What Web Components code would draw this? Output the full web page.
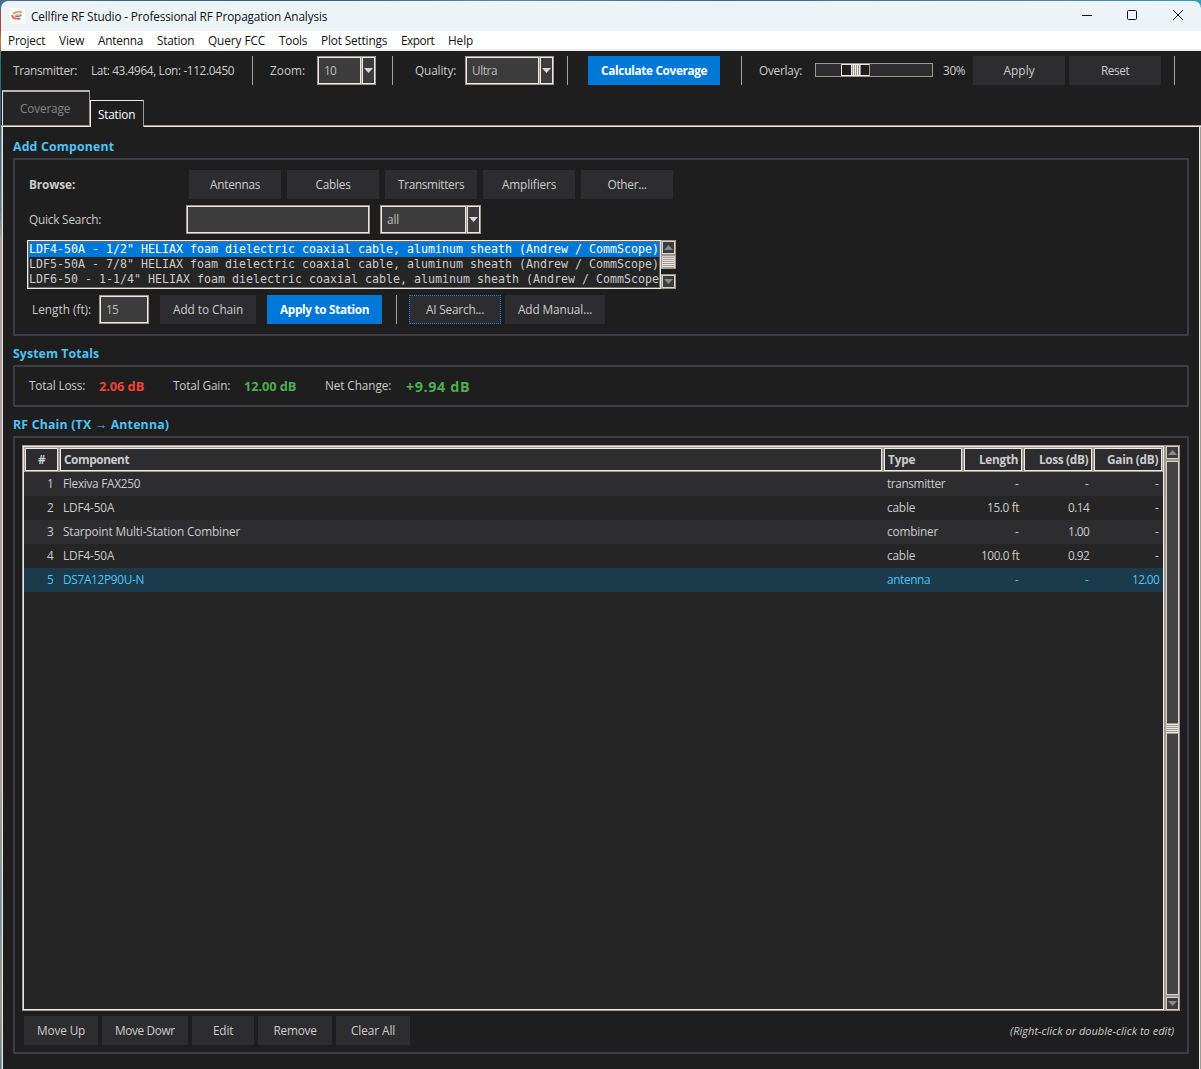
<!DOCTYPE html>
<html lang="en">
<head>
<meta charset="utf-8">
<title>Cellfire RF Studio</title>
<style>
html,body{margin:0;height:100%;overflow:hidden}
body{background:linear-gradient(90deg,#46708c,#2f5f7c 25%,#5a88a2 42%,#2f6f8f 60%,#557f99 85%,#2a9fc4);font:11.8px "Open Sans","Noto Sans",sans-serif;color:#ccc}
</style>
</head>
<body>
<rf-window></rf-window>
<script>
const GRAY = '#9e9a91', LIGHT = '#eeebe7';

const define = (name, css, html, setup) => {
  const tpl = document.createElement('template');
  tpl.innerHTML = `<style>*{box-sizing:border-box}:host{box-sizing:border-box;flex:none}${css}</style>${html}`;
  customElements.define(name, class extends HTMLElement {
    constructor() {
      super();
      this.attachShadow({ mode: 'open' }).appendChild(tpl.content.cloneNode(true));
    }
    connectedCallback() {
      if (this.hasAttribute('width')) this.style.width = this.getAttribute('width') + 'px';
      if (this.hasAttribute('gap')) this.style.marginLeft = this.getAttribute('gap') + 'px';
      if (setup) setup(this);
    }
  });
};

define('rf-sep', `:host{display:block;width:1px;height:29px;background:#a3a3a5}`, ``);

define('rf-button', `
  :host{display:flex;align-items:center;justify-content:center;height:29px;background:#2d2d30;color:#ccc;overflow:hidden}
  :host([primary]){background:#0078d7;color:#fff;font-weight:700}
  :host([focused]){border:1px dotted #0a84e6}
  :host([clip]) div{width:60px;overflow:hidden}`,
  `<div><slot></slot></div>`);

define('rf-field', `
  :host{display:flex;align-items:center;height:29px;border:1px solid ${GRAY};box-shadow:inset 0 0 0 1px ${LIGHT};background:#3c3c3c;padding-left:6px;color:#bdbdbd}`,
  `<slot></slot>`);

define('rf-combo', `
  :host{display:flex;height:29px;color:#bdbdbd}
  .f{flex:1;border:1px solid ${GRAY};border-right:0;box-shadow:inset 0 0 0 1px ${LIGHT};background:#3c3c3c;display:flex;align-items:center;padding-left:6px}
  .a{width:15px;border:1px solid ${GRAY};box-shadow:inset 0 0 0 1px ${LIGHT};background:#3c3c3c;display:flex;align-items:center;justify-content:center}
  svg{display:block}`,
  `<div class="f"><slot></slot></div><div class="a"><svg width="9" height="5"><path d="M0 0H9L4.5 5Z" fill="#d8d8d8"/></svg></div>`);

define('rf-scale', `
  :host{display:block;width:118px;height:14px;margin-bottom:1px;border:1px solid ${GRAY};background:#2d2d30;padding-left:25px}
  .t{width:29px;height:12px;border:1px solid ${LIGHT};border-right-color:${GRAY};background:#1e1e1e;display:flex;justify-content:center}
  .g{width:10px;background:repeating-linear-gradient(90deg,${LIGHT} 0 1px,${GRAY} 1px 2px)}`,
  `<div class="t"><div class="g"></div></div>`);

define('rf-scrollbar', `
  :host{display:flex;flex-direction:column;width:15px;background:#1e1e1e}
  .b,.t{border:1px solid ${GRAY};box-shadow:inset 0 0 0 1px #d6d2cb;background:#3c3c3c;display:flex;align-items:center;justify-content:center;flex:none}
  .b{height:15px}
  .t{flex:1;background:#424242}
  :host([short]) .t{flex:none;height:14px;margin-bottom:5px}
  .g{align-self:center;width:11px;height:11px;background:repeating-linear-gradient(${GRAY} 0 1px,${LIGHT} 1px 2px)}
  svg{display:block}`,
  `<div class="b"><svg width="9" height="5"><path d="M0 5H9L4.500 0Z" fill="#8a8a8a"/></svg></div>
   <div class="t"><div class="g"></div></div>
   <div class="b"><svg width="9" height="5"><path d="M0 0H9L4.500 5Z" fill="#8a8a8a"/></svg></div>`);

define('rf-group', `
  :host{display:block}
  .h{height:24px;padding-top:1px;line-height:24px;color:#4fc3f7;font-weight:700;font-size:12.300px}
  .b{border:2px solid #3d3d42;border-radius:1px;height:var(--body)}
  ::slotted(rf-text){padding-bottom:0}`,
  `<div class="h"><slot name="title"></slot></div><div class="b"><slot></slot></div>`);

define('rf-row', `:host{display:flex;align-items:center}`, `<slot></slot>`);

define('rf-titlebar', `
  :host{display:flex;align-items:center;height:30px;background:#ecf4f8;color:#111;padding-left:8px;border-radius:7px 7px 0 0}
  .i{width:16px;height:16px;background:#fff;margin-right:6px}
  .s{flex:1}
  svg{display:block}
  rf-text{padding-bottom:0}
  .c{margin-right:17px;width:106px}`,
  `<svg class="i" viewBox="0 0 16 16" fill="none"><path d="M13 4.200C9.500 3.300 5.500 4 4.300 6" stroke="#f08a4b" stroke-width="1.500"/><path d="M3.200 7C3 9.800 6 11 11.500 10.700" stroke="#ee5f38" stroke-width="1.900"/><path d="M6.200 7.300C8 5.900 10 5.800 12.300 6.400" stroke="#f4a27a" stroke-width=".9"/><path d="M6.200 8.200H9.500C11 8.200 11.800 7.500 12.200 6.800" stroke="#3587c8" stroke-width="1.500"/></svg>
   <rf-text w="296">Cellfire RF Studio - Professional RF Propagation Analysis</rf-text><div class="s"></div>
   <svg class="c" width="106" height="12" viewBox="0 0 106 12" fill="none" stroke="#111"><path d="M4 5.500H14"/><rect x="49.500" y=".5" width="9" height="9" rx="1"/><path d="M95 0L105 10M105 0L95 10"/></svg>`);

define('rf-menubar', `
  :host{display:flex;align-items:center;gap:14px;height:20px;padding-left:7px;background:#fff;border-bottom:2px solid #f0f0f0;color:#111}
  rf-text{margin-top:2px}`,
  `<rf-text w="37">Project</rf-text><rf-text w="25">View</rf-text><rf-text w="45">Antenna</rf-text><rf-text w="37">Station</rf-text><rf-text w="57">Query FCC</rf-text><rf-text w="28">Tools</rf-text><rf-text w="66">Plot Settings</rf-text><rf-text w="33">Export</rf-text><rf-text w="25">Help</rf-text>`);

define('rf-toolbar', `:host{display:flex;align-items:center;height:39px;padding:0 0 0 12px}`,
  `<rf-text w="64">Transmitter:</rf-text><rf-text gap="14" w="143">Lat: 43.4964, Lon: -112.0450</rf-text>
   <rf-sep gap="18"></rf-sep><rf-text gap="17" w="35">Zoom:</rf-text><rf-combo gap="12" width="59"><rf-text w="12">10</rf-text></rf-combo>
   <rf-sep gap="16"></rf-sep><rf-text gap="22" w="41">Quality:</rf-text><rf-combo gap="9" width="89"><rf-text w="25">Ultra</rf-text></rf-combo>
   <rf-sep gap="13"></rf-sep><rf-button primary gap="20" width="132"><rf-text w="106">Calculate Coverage</rf-text></rf-button>
   <rf-sep gap="21"></rf-sep><rf-text gap="17" w="43">Overlay:</rf-text><rf-scale gap="13"></rf-scale><rf-text gap="10" w="22">30%</rf-text>
   <rf-button gap="8" width="92"><rf-text w="31">Apply</rf-text></rf-button><rf-button gap="4" width="92"><rf-text w="28">Reset</rf-text></rf-button>
   <rf-sep gap="13"></rf-sep>`);

define('rf-tabs', `
  :host{display:flex;align-items:flex-end;height:37px;position:relative;padding-left:1px}
  .l{position:absolute;left:0;right:0;bottom:0;height:2px;background:linear-gradient(${GRAY} 50%,${LIGHT} 50%)}
  .t{position:relative;display:flex;align-items:center;justify-content:center;border:1px solid ${LIGHT};border-bottom:0;border-right-color:${GRAY};border-top:2px solid ${LIGHT}}
  .c{width:88px;height:35px;margin-bottom:2px;padding-right:2px;background:#252526;color:#858585;border-top-color:#bab6ae}
  .s{width:54px;height:27px;background:#1e1e1e;color:#fff;border-top-width:1px;padding:2px 1px 0 0}`,
  `<div class="l"></div><div class="t c"><rf-text w="50">Coverage</rf-text></div><div class="t s"><rf-text w="37">Station</rf-text></div>`);

define('rf-listbox', `
  :host{display:flex;width:649px;height:49px}
  .l{width:634px;border:1px solid ${LIGHT};outline:1px solid #6e6c68;outline-offset:-2px;background:#252526;padding:1px 0 0 1px;font:11.630px/15px "DejaVu Sans Mono",monospace;overflow:hidden}
  .l div{height:15px;white-space:pre;width:631px}
  .l .on{background:#0078d7;color:#fff}`,
  `<div class="l"><div class="on">LDF4-50A - 1/2" HELIAX foam dielectric coaxial cable, aluminum sheath (Andrew / CommScope)</div><div>LDF5-50A - 7/8" HELIAX foam dielectric coaxial cable, aluminum sheath (Andrew / CommScope)</div><div>LDF6-50 - 1-1/4" HELIAX foam dielectric coaxial cable, aluminum sheath (Andrew / CommScope</div></div><rf-scrollbar short></rf-scrollbar>`);

define('rf-add', `
  :host{display:flex;flex-direction:column;padding:10px 0 0 12px}
  .q{margin-top:6px}.li{margin-top:6px}.n{margin-top:6px}`,
  `<rf-row><rf-text gap="2" w="46" bold>Browse:</rf-text><rf-button gap="114" width="92"><rf-text w="50">Antennas</rf-text></rf-button><rf-button gap="6" width="92"><rf-text w="35">Cables</rf-text></rf-button><rf-button gap="6" width="92"><rf-text w="66">Transmitters</rf-text></rf-button><rf-button gap="6" width="92"><rf-text w="54">Amplifiers</rf-text></rf-button><rf-button gap="6" width="92"><rf-text w="39">Other...</rf-text></rf-button></rf-row>
   <rf-row class="q"><rf-text gap="2" w="72">Quick Search:</rf-text><rf-field gap="85" width="184"></rf-field><rf-combo gap="10" width="101"><rf-text w="12">all</rf-text></rf-combo></rf-row>
   <rf-listbox class="li"></rf-listbox>
   <rf-row class="n"><rf-text gap="5" w="59">Length (ft):</rf-text><rf-field gap="8" width="50"><rf-text w="12">15</rf-text></rf-field><rf-button gap="11" width="96"><rf-text w="70">Add to Chain</rf-text></rf-button><rf-button gap="11" primary width="115"><rf-text w="89">Apply to Station</rf-text></rf-button><rf-sep gap="14"></rf-sep><rf-button gap="12" focused width="92"><rf-text w="58">AI Search...</rf-text></rf-button><rf-button gap="4" width="100"><rf-text w="74">Add Manual...</rf-text></rf-button></rf-row>`);

define('rf-totals', `
  :host{display:flex;align-items:center;height:38px;padding-left:14px}
  .v{font-weight:700;font-size:12.800px;padding-bottom:0}.r{color:#f44336}.g{color:#4caf50}.n{font-size:14.300px}`,
  `<rf-text w="56">Total Loss:</rf-text><rf-text class="v r" gap="14" w="45">2.06 dB</rf-text><rf-text gap="29" w="57">Total Gain:</rf-text><rf-text class="v g" gap="14" w="52">12.00 dB</rf-text><rf-text gap="29" w="66">Net Change:</rf-text><rf-text class="v g n" gap="15" w="64">+9.94 dB</rf-text>`);

const rows = [
  [['1', 6], ['Flexiva FAX250', 77], ['transmitter', 58], ['-', 4], ['-', 4], ['-', 4]],
  [['2', 6], ['LDF4-50A', 51], ['cable', 28], ['15.0 ft', 32], ['0.14', 21], ['-', 4]],
  [['3', 6], ['Starpoint Multi-Station Combiner', 177], ['combiner', 51], ['-', 4], ['1.00', 21], ['-', 4]],
  [['4', 6], ['LDF4-50A', 51], ['cable', 28], ['100.0 ft', 38], ['0.92', 21], ['-', 4]],
  [['5', 6], ['DS7A12P90U-N', 81], ['antenna', 43], ['-', 4], ['-', 4], ['12.00', 27]]
];
const heads = [['#', 7], ['Component', 65], ['Type', 27], ['Length', 39], ['Loss (dB)', 49], ['Gain (dB)', 51]];
const cells = list => list.map(([t, w]) => `<div><rf-text w="${w}">${t}</rf-text></div>`).join('');

define('rf-table', `
  :host{display:flex;width:1158px;height:566px}
  .t{width:1143px;border:1px solid ${GRAY};box-shadow:inset 0 0 0 1px ${LIGHT};background:#252526;padding:1px 1px 0}
  .h,.r{display:grid;grid-template-columns:35px 824px 80px 60px 70px 70px}
  .h{height:25px;font-weight:700}
  .h div{display:flex;align-items:center;border:1px solid ${GRAY};box-shadow:inset 0 0 0 1px ${LIGHT};background:#2d2d30;padding:0 4px}
  .h div:first-child{justify-content:center}
  .h div:nth-child(n+4){justify-content:flex-end}
  .r{height:24px}
  .r:nth-child(even){background:#2d2d30}
  .r div{display:flex;align-items:center;padding:0 4px}
  .r div:first-child{justify-content:flex-end;padding-right:6px}
  .r div:nth-child(n+4){justify-content:flex-end}
  .r:last-child{background:#1b3a4b;color:#4fc3f7}`,
  `<div class="t"><div class="h">${cells(heads)}</div>${rows.map(r => `<div class="r">${cells(r)}</div>`).join('')}</div><rf-scrollbar></rf-scrollbar>`);

define('rf-chain', `
  :host{display:block;padding:7px 0 0 7px}
  .a{margin-top:5px;padding-left:2px}
  .s{flex:1}
  .hint{font-style:italic;font-size:11px;margin-right:13px;padding-bottom:0}`,
  `<rf-table></rf-table><rf-row class="a"><rf-button width="74"><rf-text w="48">Move Up</rf-text></rf-button><rf-button gap="4" clip width="86"><rf-text w="62">Move Down</rf-text></rf-button><rf-button gap="4" width="62"><rf-text w="20">Edit</rf-text></rf-button><rf-button gap="4" width="74"><rf-text w="43">Remove</rf-text></rf-button><rf-button gap="4" width="74"><rf-text w="44">Clear All</rf-text></rf-button><div class="s"></div><rf-text class="hint" w="164">(Right-click or double-click to edit)</rf-text></rf-row>`);

define('rf-window', `
  :host{display:flex;flex-direction:column;height:1068px;margin:1px 0 0 1px;background:#1e1e1e;border-radius:8px 8px 0 0}
  .edge{position:absolute;left:0;top:10px;width:1px;height:1059px;background:linear-gradient(#b0413e 0 20px,#c08a3a 30px,#2f6a86 50px 110px,#5a7d90 200px,#a4a4a4 230px 780px,#6b93a6 900px,#9a9a9a 1000px,#4f8299)}
  .p{flex:1;border-left:1px solid ${GRAY};border-right:1px solid ${GRAY};box-shadow:inset 1px 0 ${LIGHT},inset -1px 0 ${LIGHT};padding:7px 11px 0 11px}
  .g1{--body:178px}.g2{--body:42px;margin-top:5px}.g3{--body:618px;margin-top:5px}`,
  `<div class="edge"></div><rf-titlebar></rf-titlebar><rf-menubar></rf-menubar><rf-toolbar></rf-toolbar><rf-tabs></rf-tabs>
   <div class="p">
     <rf-group class="g1"><rf-text slot="title" w="101">Add Component</rf-text><rf-add></rf-add></rf-group>
     <rf-group class="g2"><rf-text slot="title" w="86">System Totals</rf-text><rf-totals></rf-totals></rf-group>
     <rf-group class="g3"><rf-text slot="title" w="156">RF Chain (TX → Antenna)</rf-text><rf-chain></rf-chain></rf-group>
   </div>`);

/* One line of text, tracked so that it fills the width in its w attribute. Defined last: its parents' fonts must apply when it measures. */
define('rf-text', `
  :host{display:inline-block;white-space:pre;padding-bottom:2px}
  :host([bold]){font-weight:700}
  span{display:inline-block}`,
  `<span><slot></slot></span>`, el => {
    const w = +el.getAttribute('w');
    const span = el.shadowRoot.querySelector('span');
    const n = el.textContent.length;
    const natural = span.getBoundingClientRect().width;
    el.style.width = w + 'px';
    span.style.letterSpacing = (n > 1 ? (w + .2 - natural) / n : 0) + 'px';
  });
</script>
</body>
</html>
